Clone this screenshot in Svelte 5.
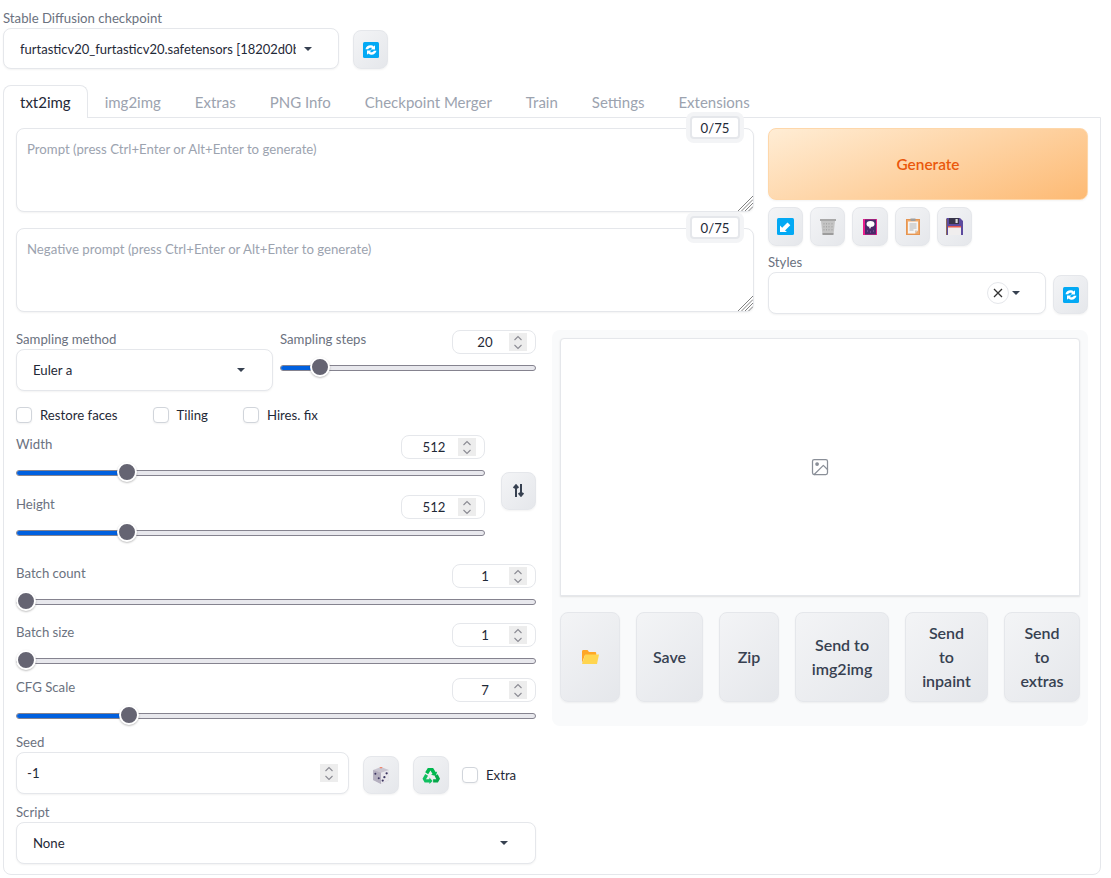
<script>
  const tabs = ['txt2img', 'img2img', 'Extras', 'PNG Info', 'Checkpoint Merger', 'Train', 'Settings', 'Extensions'];
  const outputs = ['Save', 'Zip', 'Send to\nimg2img', 'Send\nto\ninpaint', 'Send\nto\nextras'];

  // where the thumb sits, 0 to 1
  const pos = (v, min, max) => (v - min) / (max - min);
</script>

{#snippet refresh()}
  <svg width="16" height="16" viewBox="0 0 16 16">
    <rect x="0" y="0" width="16" height="16" rx="1.5" fill="#03a9f4" />
    <path d="M2.500 7.200C3 4.600 5.300 3 8 3.300c1.100.1 2 .5 2.700 1.100L12 3.200v4.400H7.600l1.500-1.500c-1.400-.8-3.200-.3-3.900 1.100z" fill="#fff" />
    <path d="M13.500 8.800C13 11.400 10.700 13 8 12.700c-1.100-.1-2-.5-2.700-1.100L4 12.800V8.400h4.400L6.900 9.900c1.400.8 3.200.3 3.900-1.100z" fill="#fff" />
  </svg>
{/snippet}

{#snippet arrowIcon()}
  <svg width="17" height="17" viewBox="0 0 17 17">
    <rect width="17" height="17" rx="1.500" fill="#03a9f4" />
    <path d="M3 14V7.500l2.200 2.200L10.500 4.500l2.800 2.800-5.300 5.200L10 14z" fill="#fff" />
  </svg>
{/snippet}

{#snippet trashIcon()}
  <svg width="18" height="17" viewBox="0 0 18 17">
    <path d="M1 1h16v2H1z" fill="#a8a8a8" />
    <path d="M2 3h14l-1.500 14h-11z" fill="#c4c4c4" />
    <path d="M3.500 15h11l-.2 2H3.700z" fill="#9c9c9c" />
    <path d="M5 5v8M7.500 5v8M10 5v8M13 5v8" stroke="#a6a6a6" stroke-width="1" stroke-dasharray="1.500 1.500" />
  </svg>
{/snippet}

{#snippet bookIcon()}
  <svg width="14" height="16" viewBox="0 0 14 16">
    <rect width="14" height="16" fill="#e91e8c" />
    <rect x="2" y="0.500" width="11" height="15" fill="#4a2a6a" />
    <ellipse cx="7.500" cy="5" rx="4" ry="3" fill="#fff" />
    <path d="M6 8h2l-1 2z" fill="#fff" />
    <path d="M4 12h1M7 13h1M10 12h1" stroke="#8e6bb0" />
  </svg>
{/snippet}

{#snippet clipboardIcon()}
  <svg width="14" height="17" viewBox="0 0 14 17">
    <rect x="0.500" y="1.500" width="13" height="15" fill="#f0a868" stroke="#e59552" />
    <path d="M2 3.500h10v9l-3 3H2z" fill="#f5f5f5" />
    <path d="M9 15.500l3-3H9z" fill="#d9c8b8" />
    <rect x="4.500" y="0.500" width="5" height="2.500" fill="#9e9e9e" />
    <path d="M3.500 6h7M3.500 8h7M3.500 10h7M3.500 12h4" stroke="#b5b5b5" />
  </svg>
{/snippet}

{#snippet floppyIcon()}
  <svg width="17" height="17" viewBox="0 0 17 17">
    <path d="M1 0h13l3 3v14H0V1z" fill="#5c4a9e" />
    <rect x="3" y="0" width="10" height="6" fill="#37344a" />
    <rect x="9.500" y="1" width="2.200" height="4" fill="#ddd" />
    <rect x="2" y="9" width="13" height="8" fill="#f0eeee" />
    <rect x="2" y="8" width="13" height="1.500" fill="#e5584f" />
    <rect x="0" y="1" width="1" height="16" fill="#8a6a5a" />
  </svg>
{/snippet}

{#snippet diceIcon()}
  <svg width="18" height="17" viewBox="0 0 16 15">
    <path d="M8 0l7 2.500v9L8 15 1 11.500v-9z" fill="#c9c5d0" />
    <path d="M1 2.500L8 5v10L1 11.500z" fill="#b5b0c0" />
    <path d="M8 5l7-2.500v9L8 15z" fill="#e9e7ec" />
    <path d="M6.500 0h3l-1.500 1.500z" fill="#f2856b" />
    <g fill="#3b3560">
      <circle cx="3" cy="6" r="0.900" />
      <circle cx="6" cy="10" r="0.900" />
      <circle cx="13" cy="5.500" r="1" />
      <circle cx="11" cy="9" r="1" />
      <circle cx="9.500" cy="12" r="1" />
    </g>
  </svg>
{/snippet}

{#snippet recycleIcon()}
  <svg width="18" height="17" viewBox="0 0 17 16">
    <path d="M5.500 1h5l2.500 4 1.300-.8-1.200 4.300L8.500 7.300l1.500-.8L8 3.200 5.800 6.800 3 5z" fill="#00b84f" />
    <path d="M3 6.500l2.700 1.700L3.800 11.500H7V10l3 3.200L7 16v-1.500H2.500L.5 11z" fill="#10c060" />
    <path d="M12 8.500l2.800-1.600L17 11l-2 3.500h-4.500v-3h3z" fill="#06a84a" />
  </svg>
{/snippet}

{#snippet folderIcon()}
  <svg width="17" height="14" viewBox="0 0 17 14">
    <path d="M0 1.500C0 .7.600 0 1.300 0h4.200l1.500 2h6c.7 0 1.200.5 1.200 1.200V5H3L0 13z" fill="#ffa726" />
    <path d="M3.200 4.500H17l-2 9.500H0z" fill="#ffd54f" />
  </svg>
{/snippet}

{#snippet caret()}
  <span class="caret"></span>
{/snippet}

{#snippet grip()}
  <svg class="grip" width="15" height="15" viewBox="0 0 15 15" stroke="#808080" stroke-width="1">
    <path d="M0 15L15 0M3.500 15L15 3.500M7 15l8-8M10.500 15l4.500-4.500" />
  </svg>
{/snippet}

{#snippet stepper()}
  <span class="stepper">
    <svg width="10" height="15" viewBox="0 0 10 15" fill="none" stroke="#8b8b93" stroke-width="1.100">
      <path d="M1.500 5L5 1.500 8.500 5M1.500 10L5 13.500 8.500 10" />
    </svg>
  </span>
{/snippet}

{#snippet slider(label, value, min, max)}
  {@const p = pos(value, min, max)}
  <div class="slider-head">
    <span class="label">{label}</span>
    <div class="number"><span class="num-value">{value}</span>{@render stepper()}</div>
  </div>
  <div class="slider">
    <div class="track">
      <div class="fill" style="width: calc(10px + {p} * (100% - 20px))"></div>
    </div>
    <div class="thumb" style="left: calc({p} * (100% - 20px))"></div>
  </div>
{/snippet}

{#snippet check(label)}
  <label class="check"><input type="checkbox" />{label}</label>
{/snippet}

<div class="page">
  <div class="top">
    <div class="field-ckpt">
      <div class="label">Stable Diffusion checkpoint</div>
      <div class="select ckpt">
        <span class="select-text">furtasticv20_furtasticv20.safetensors [18202d0b</span>
        {@render caret()}
      </div>
    </div>
    <button class="tool">{@render refresh()}</button>
  </div>

  <div class="tabs">
    {#each tabs as tab, i}
      <button class="tab" class:active={i === 0}>{tab}</button>
    {/each}
  </div>

  <div class="panel">
    <div class="prompts">
      <div class="prompt-col">
        <div class="prompt">
          <textarea placeholder="Prompt (press Ctrl+Enter or Alt+Enter to generate)"></textarea>
          <span class="counter">0/75</span>
          {@render grip()}
        </div>
        <div class="prompt">
          <textarea placeholder="Negative prompt (press Ctrl+Enter or Alt+Enter to generate)"></textarea>
          <span class="counter">0/75</span>
          {@render grip()}
        </div>
      </div>

      <div class="actions">
        <button class="generate">Generate</button>
        <div class="tool-row">
          <button class="tool">{@render arrowIcon()}</button>
          <button class="tool">{@render trashIcon()}</button>
          <button class="tool w36">{@render bookIcon()}</button>
          <button class="tool">{@render clipboardIcon()}</button>
          <button class="tool">{@render floppyIcon()}</button>
        </div>
        <div class="styles">
          <div class="styles-field">
            <div class="label">Styles</div>
            <div class="select styles-select">
              <span class="clear">
                <svg width="10" height="10" viewBox="0 0 10 10" stroke="#333" stroke-width="1.300"><path d="M1 1l8 8M9 1l-8 8" /></svg>
              </span>
              {@render caret()}
            </div>
          </div>
          <button class="tool">{@render refresh()}</button>
        </div>
      </div>
    </div>

    <div class="lower">
      <div class="settings">
        <div class="sampling">
          <div class="sampling-method">
            <div class="label">Sampling method</div>
            <div class="select"><span class="select-text">Euler a</span>{@render caret()}</div>
          </div>
          <div class="sampling-steps">
            {@render slider('Sampling steps', 20, 1, 150)}
          </div>
        </div>

        <div class="checks">
          {@render check('Restore faces')}
          {@render check('Tiling')}
          {@render check('Hires. fix')}
        </div>

        <div class="dims">
          <div class="dims-sliders">
            {@render slider('Width', 512, 64, 2048)}
            <div class="gap-9"></div>
            {@render slider('Height', 512, 64, 2048)}
          </div>
          <button class="tool swap">
            <svg width="11" height="13" viewBox="0 0 11 13" fill="none" stroke="#374151" stroke-width="2">
              <path d="M3 13V1.500M.7 4L3 1.300 5.300 4M8 0v11.500M5.700 9L8 11.700 10.300 9" />
            </svg>
          </button>
        </div>

        <div class="batch-count">{@render slider('Batch count', 1, 1, 100)}</div>
        <div class="batch-size">{@render slider('Batch size', 1, 1, 8)}</div>
        <div class="cfg">{@render slider('CFG Scale', 7, 1, 30)}</div>

        <div class="seed-row">
          <div class="seed-field">
            <div class="label">Seed</div>
            <div class="seed-input"><span>-1</span>{@render stepper()}</div>
          </div>
          <button class="tool w36">{@render diceIcon()}</button>
          <button class="tool w36">{@render recycleIcon()}</button>
          <div class="extra">{@render check('Extra')}</div>
        </div>

        <div class="script">
          <div class="label">Script</div>
          <div class="select"><span class="select-text">None</span>{@render caret()}</div>
        </div>
      </div>

      <div class="result">
        <div class="gallery">
          <svg width="20" height="20" viewBox="0 0 24 24" fill="none" stroke="#8a8f98" stroke-width="1.500" stroke-linecap="round" stroke-linejoin="round">
            <rect x="3" y="3" width="18" height="18" rx="2" />
            <circle cx="8.500" cy="8.500" r="1.500" fill="#8a8f98" />
            <path d="M21 15l-5-5L5 21" />
          </svg>
        </div>
        <div class="out-buttons">
          <button class="out">{@render folderIcon()}</button>
          {#each outputs as text}
            <button class="out">{text}</button>
          {/each}
        </div>
      </div>
    </div>
  </div>
</div>

<style>
  :global(body) {
    background: #fff;
    font-family: Lato, "Noto Sans", sans-serif;
    font-size: 13.2px;
    color: #1f2937;
  }

  button {
    font-family: inherit;
    padding: 0;
    cursor: pointer;
  }

  .page {
    padding: 8px 10px 0 3px;
  }

  .label {
    font-size: 13.2px;
    line-height: 19px;
    color: #6b7280;
  }

  .top {
    display: flex;
    align-items: flex-end;
    gap: 14px;
  }

  .field-ckpt {
    width: 336px;
    padding-top: 1px;
  }

  .select {
    display: flex;
    align-items: center;
    height: 42px;
    box-sizing: border-box;
    padding: 0 27px 0 16px;
    background: #fff;
    border: 1px solid #e5e7eb;
    border-radius: 8px;
    box-shadow: 0 1px 2px rgba(0, 0, 0, 0.05);
  }

  .select-text {
    flex: 1;
    min-width: 0;
    overflow: hidden;
    white-space: nowrap;
    color: #1f2937;
  }

  .ckpt {
    height: 41px;
    padding-right: 26px;
  }

  .ckpt .select-text {
    margin-right: 8px;
    font-size: 13px;
  }

  .caret {
    flex: none;
    width: 0;
    height: 0;
    border-left: 4px solid transparent;
    border-right: 4px solid transparent;
    border-top: 4px solid #374151;
  }

  .tool {
    flex: none;
    display: flex;
    align-items: center;
    justify-content: center;
    width: 35px;
    height: 39px;
    border: 1px solid #e5e7eb;
    border-radius: 8px;
    background: linear-gradient(135deg, #f3f4f6, #e5e7eb);
    box-shadow: 0 1px 2px rgba(0, 0, 0, 0.05);
  }

  .w36 {
    width: 36px;
  }

  .tabs {
    display: flex;
    margin-top: 16px;
    height: 32px;
  }

  .tab {
    height: 32px;
    padding: 0 16px;
    border: 1px solid transparent;
    border-bottom: none;
    border-radius: 8px 8px 0 0;
    background: none;
    font-size: 15px;
    color: #9ca3af;
  }

  .tab.active {
    position: relative;
    z-index: 1;
    height: 33px;
    border-color: #e5e7eb;
    background: #fff;
    color: #1f2937;
  }

  .panel {
    box-sizing: border-box;
    height: 758px;
    padding: 10px 12px;
    border: 1px solid #e5e7eb;
    border-radius: 0 0 8px 8px;
  }

  .prompts {
    display: flex;
    gap: 14px;
  }

  .prompt-col {
    display: flex;
    flex-direction: column;
    gap: 16px;
    width: 738px;
  }

  .prompt {
    position: relative;
    height: 84px;
  }

  textarea {
    display: block;
    width: 100%;
    height: 100%;
    box-sizing: border-box;
    padding: 10px;
    border: 1px solid #e5e7eb;
    border-radius: 8px;
    font-family: inherit;
    font-size: 13.2px;
    line-height: 20px;
    resize: none;
    outline: none;
    box-shadow: 0 1px 2px rgba(0, 0, 0, 0.05);
  }

  textarea::placeholder {
    color: #9ca3af;
  }

  .counter {
    position: absolute;
    top: -12px;
    right: 14px;
    width: 50px;
    height: 23px;
    box-sizing: border-box;
    line-height: 20px;
    text-align: center;
    background: #fff;
    border: 2px solid #e5e7eb;
    border-radius: 4px;
    box-shadow: 0 0 0 4px #f3f4f6;
    color: #1f2937;
  }

  .grip {
    position: absolute;
    right: 1px;
    bottom: 1px;
  }

  .actions {
    width: 320px;
  }

  .generate {
    display: block;
    width: 100%;
    height: 72px;
    border: 1px solid #fed7aa;
    border-radius: 8px;
    background: linear-gradient(160deg, #ffedd5, #fdba74);
    font-size: 15.4px;
    font-weight: 600;
    color: #ea580c;
    box-shadow: 0 1px 2px rgba(0, 0, 0, 0.05);
  }

  .tool-row {
    display: flex;
    gap: 7px;
    margin-top: 7px;
  }

  .styles {
    display: flex;
    align-items: flex-end;
    gap: 7px;
    margin-top: 7px;
  }

  .styles-field {
    flex: 1;
  }

  .styles-select {
    justify-content: flex-end;
    padding-right: 25px;
    gap: 3px;
  }

  .clear {
    display: flex;
    align-items: center;
    justify-content: center;
    width: 20px;
    height: 20px;
    border: 1px solid #e5e7eb;
    border-radius: 50%;
  }

  .lower {
    display: flex;
    align-items: flex-start;
    gap: 16px;
    margin-top: 16px;
  }

  .settings {
    width: 520px;
  }

  .sampling {
    display: flex;
    gap: 7px;
  }

  .sampling-method {
    width: 257px;
  }

  .sampling-steps {
    flex: 1;
  }

  .slider-head {
    display: flex;
    justify-content: space-between;
    height: 24px;
  }

  .number {
    display: flex;
    align-items: center;
    width: 84px;
    height: 24px;
    box-sizing: border-box;
    padding-right: 8px;
    border: 1px solid #e5e7eb;
    border-radius: 8px;
    background: #fff;
    color: #1f2937;
  }

  .num-value {
    flex: 1;
    padding-left: 8px;
    text-align: center;
  }

  .stepper {
    display: flex;
    align-items: center;
    justify-content: center;
    width: 18px;
    height: 18px;
    background: #ededed;
  }

  .slider {
    position: relative;
    display: flex;
    align-items: center;
    height: 27px;
  }

  .track {
    position: relative;
    flex: 1;
    height: 6px;
    box-sizing: border-box;
    overflow: hidden;
    border: 1px solid #85838f;
    border-radius: 3px;
    background: #e8e8ed;
  }

  .fill {
    position: absolute;
    top: -1px;
    bottom: -1px;
    left: -1px;
    background: #0060df;
  }

  .thumb {
    position: absolute;
    top: 3px;
    width: 20px;
    height: 20px;
    box-sizing: border-box;
    border: 2px solid #fff;
    border-radius: 50%;
    background: #656472;
    box-shadow: 0 1px 2px rgba(0, 0, 0, 0.25);
  }

  .checks {
    display: flex;
    gap: 35px;
    margin-top: 16px;
  }

  .check {
    display: flex;
    align-items: center;
    gap: 8px;
    height: 16px;
    color: #1f2937;
  }

  .check input {
    appearance: none;
    margin: 0;
    width: 16px;
    height: 16px;
    border: 1px solid #d1d5db;
    border-radius: 4px;
    background: #fff;
    box-shadow: 0 1px 2px rgba(0, 0, 0, 0.05);
  }

  .dims {
    display: flex;
    align-items: center;
    gap: 16px;
    margin-top: 12px;
  }

  .dims-sliders {
    width: 469px;
  }

  .gap-9 {
    height: 9px;
  }

  .swap {
    height: 38px;
  }

  .batch-count {
    margin-top: 18px;
  }

  .batch-size {
    margin-top: 8px;
  }

  .cfg {
    margin-top: 4px;
  }

  .seed-row {
    display: flex;
    align-items: flex-end;
    gap: 14px;
    margin-top: 4px;
  }

  .seed-field {
    width: 333px;
  }

  .seed-input {
    display: flex;
    align-items: center;
    justify-content: space-between;
    height: 42px;
    box-sizing: border-box;
    padding: 0 10px;
    background: #fff;
    border: 1px solid #e5e7eb;
    border-radius: 8px;
    box-shadow: 0 1px 2px rgba(0, 0, 0, 0.05);
  }

  .seed-row .tool {
    height: 38px;
  }

  .extra {
    align-self: flex-end;
    height: 38px;
    margin-left: -1px;
    display: flex;
    align-items: center;
  }

  .script {
    margin-top: 9px;
  }

  .result {
    box-sizing: border-box;
    width: 536px;
    height: 396px;
    padding: 8px;
    background: #f9fafb;
    border-radius: 8px;
  }

  .gallery {
    display: flex;
    align-items: center;
    justify-content: center;
    height: 258px;
    box-sizing: border-box;
    background: #fff;
    border: 1px solid #e5e7eb;
    border-radius: 4px 4px 0 0;
    box-shadow: 0 1px 2px rgba(0, 0, 0, 0.1);
  }

  .out-buttons {
    display: grid;
    grid-template-columns: 60px 67px 60px 94px 83px 76px;
    gap: 16px;
    margin-top: 16px;
  }

  .out {
    display: flex;
    align-items: center;
    justify-content: center;
    height: 90px;
    padding: 0 8px;
    border: 1px solid #e5e7eb;
    border-radius: 8px;
    background: linear-gradient(135deg, #f3f4f6, #e5e7eb);
    font-size: 16px;
    font-weight: 600;
    line-height: 24px;
    white-space: pre-line;
    color: #374151;
    box-shadow: 0 1px 2px rgba(0, 0, 0, 0.05);
  }
</style>
